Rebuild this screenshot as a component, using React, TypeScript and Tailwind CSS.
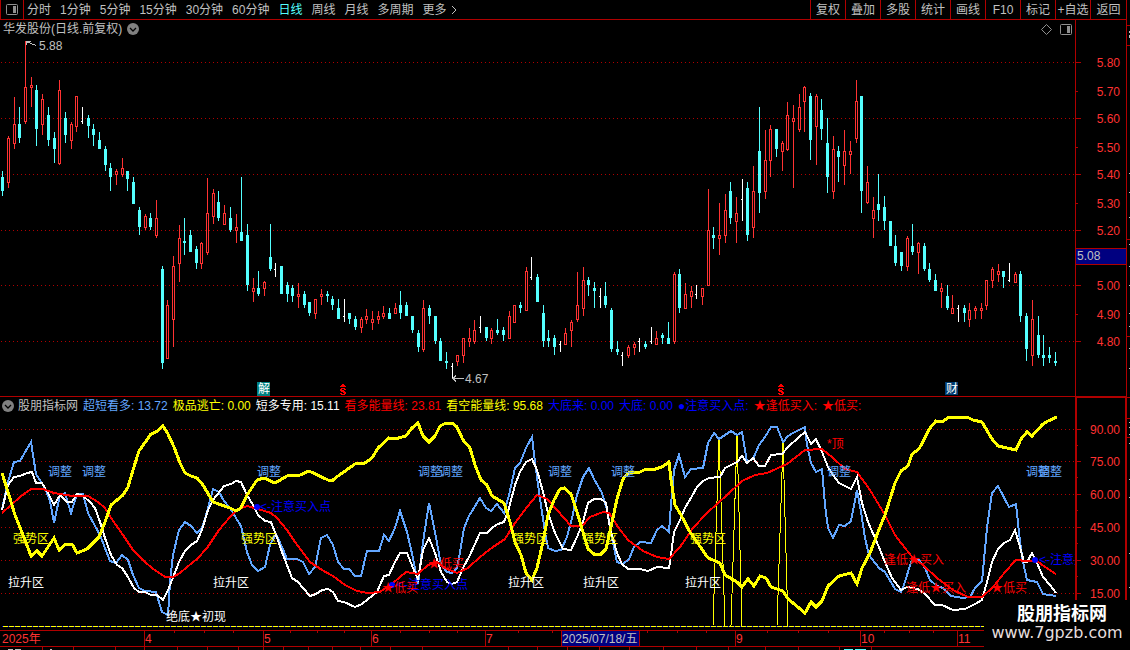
import { Fragment } from "react";

type Kind = "r" | "c" | "w";
type Candle = [Kind, number, number, number, number, number];

const periods = ["分时", "1分钟", "5分钟", "15分钟", "30分钟", "60分钟", "日线", "周线", "月线", "多周期"];
const tools = ["复权", "叠加", "多股", "统计", "画线", "F10", "标记", "+自选", "返回"];

const legend = [
  { text: "超短看多: 13.72", color: "text-[#62a6ff]" },
  { text: "极品逃亡: 0.00", color: "text-[#ffff00]" },
  { text: "短多专用: 15.11", color: "text-white" },
  { text: "看多能量线: 23.81", color: "text-[#ff0000]" },
  { text: "看空能量线: 95.68", color: "text-[#ffff00]" },
  { text: "大底来: 0.00", color: "text-[#0000ff]" },
  { text: "大底: 0.00", color: "text-[#0000ff]" },
  { text: "●注意买入点:", color: "text-[#0000ff]" },
  { text: "★逢低买入:", color: "text-[#ff0000]" },
  { text: "★低买:", color: "text-[#ff0000]" },
];

// kind, x, high, body top, body bottom, low
const candles: Candle[] = [
  ["c", 2, 171, 177, 191, 196], ["r", 8, 136, 138, 183, 188], ["r", 14, 97, 124, 144, 149], ["c", 19, 107, 124, 138, 143],
  ["r", 25, 41, 87, 122, 124], ["r", 31, 77, 85, 88, 107], ["c", 36, 85, 90, 129, 146], ["r", 42, 94, 99, 125, 135],
  ["c", 48, 107, 115, 140, 146], ["c", 54, 132, 138, 149, 163], ["r", 59, 80, 90, 164, 165], ["c", 65, 112, 118, 135, 143],
  ["r", 71, 122, 124, 141, 149], ["r", 76, 96, 96, 127, 132], ["w", 82, 107, 121, 122, 124], ["c", 88, 115, 118, 126, 138],
  ["c", 93, 124, 129, 135, 146], ["c", 99, 132, 140, 149, 149], ["c", 105, 146, 149, 165, 171], ["c", 110, 163, 168, 177, 191],
  ["r", 116, 169, 171, 175, 185], ["r", 122, 158, 168, 175, 177], ["c", 127, 171, 171, 179, 191], ["c", 133, 177, 182, 204, 204],
  ["c", 139, 207, 210, 227, 235], ["r", 145, 214, 216, 228, 230], ["c", 150, 213, 218, 227, 230], ["r", 156, 200, 218, 236, 238],
  ["c", 162, 266, 269, 363, 369], ["r", 167, 300, 305, 359, 359], ["r", 173, 256, 266, 320, 347], ["r", 179, 225, 238, 264, 282],
  ["c", 184, 218, 241, 243, 255], ["c", 190, 230, 235, 252, 252], ["c", 196, 246, 249, 263, 269], ["r", 201, 242, 243, 264, 269],
  ["r", 207, 178, 213, 253, 255], ["r", 213, 189, 193, 217, 224], ["c", 218, 191, 202, 218, 221], ["r", 224, 205, 213, 225, 225],
  ["c", 230, 207, 218, 230, 232], ["r", 236, 214, 227, 231, 243], ["c", 241, 177, 232, 241, 241], ["c", 247, 224, 235, 285, 291],
  ["r", 253, 278, 288, 292, 302], ["c", 258, 271, 288, 294, 296], ["r", 264, 281, 282, 289, 296], ["c", 270, 224, 257, 269, 271],
  ["w", 275, 263, 269, 270, 277], ["c", 281, 266, 266, 294, 294], ["c", 287, 282, 285, 294, 302], ["c", 292, 285, 288, 296, 302],
  ["r", 298, 283, 294, 297, 308], ["c", 304, 291, 294, 305, 308], ["c", 309, 302, 302, 313, 316], ["r", 315, 299, 299, 314, 319],
  ["r", 321, 289, 294, 297, 305], ["c", 327, 291, 294, 296, 302], ["c", 332, 296, 299, 305, 310], ["c", 338, 299, 308, 319, 319],
  ["w", 344, 299, 316, 317, 322], ["c", 349, 313, 313, 319, 324], ["c", 355, 316, 319, 327, 330], ["r", 361, 317, 319, 328, 333],
  ["r", 366, 309, 316, 320, 324], ["r", 372, 311, 319, 323, 330], ["r", 378, 311, 316, 320, 324], ["r", 383, 306, 313, 317, 319],
  ["c", 389, 308, 313, 319, 319], ["r", 395, 303, 308, 314, 314], ["c", 400, 291, 305, 313, 319], ["c", 406, 302, 305, 316, 316],
  ["c", 412, 316, 316, 330, 333], ["c", 418, 330, 333, 347, 352], ["r", 423, 300, 308, 350, 352], ["c", 429, 305, 308, 316, 324],
  ["c", 435, 316, 316, 341, 344], ["c", 440, 338, 341, 361, 361], ["c", 446, 352, 361, 363, 369], ["w", 452, 363, 366, 367, 379],
  ["r", 457, 355, 355, 362, 366], ["r", 463, 338, 338, 356, 363], ["r", 469, 328, 338, 342, 347], ["r", 474, 320, 330, 342, 344],
  ["w", 480, 316, 327, 328, 333], ["c", 486, 327, 327, 338, 341], ["r", 491, 328, 330, 339, 344], ["c", 497, 319, 330, 333, 335],
  ["c", 503, 327, 330, 335, 341], ["r", 509, 311, 316, 339, 339], ["r", 514, 305, 305, 323, 323], ["c", 520, 302, 305, 308, 313],
  ["r", 526, 267, 271, 311, 311], ["w", 531, 257, 277, 278, 280], ["c", 537, 274, 277, 302, 302], ["c", 543, 305, 313, 341, 347],
  ["c", 548, 330, 338, 341, 347], ["c", 554, 335, 338, 347, 355], ["w", 560, 341, 344, 345, 352], ["r", 565, 328, 333, 345, 345],
  ["r", 571, 320, 322, 331, 347], ["r", 577, 272, 305, 320, 322], ["r", 583, 267, 280, 309, 316], ["c", 588, 277, 280, 285, 296],
  ["c", 594, 282, 288, 291, 308], ["w", 600, 288, 296, 297, 308], ["c", 605, 282, 296, 305, 308], ["c", 611, 308, 310, 349, 352],
  ["c", 617, 341, 349, 352, 355], ["w", 622, 352, 355, 356, 366], ["r", 628, 345, 347, 356, 358], ["r", 634, 342, 344, 348, 355],
  ["w", 639, 338, 341, 342, 352], ["c", 645, 341, 344, 347, 349], ["w", 651, 327, 341, 342, 344], ["r", 656, 331, 338, 345, 345],
  ["c", 662, 333, 335, 338, 344], ["c", 668, 322, 338, 344, 344], ["r", 674, 272, 274, 342, 344], ["c", 679, 269, 274, 308, 313],
  ["r", 685, 283, 294, 309, 309], ["r", 691, 286, 291, 297, 308], ["w", 696, 285, 294, 295, 299], ["r", 702, 288, 288, 297, 305],
  ["r", 708, 189, 230, 286, 286], ["c", 713, 227, 235, 238, 249], ["r", 719, 203, 235, 239, 255], ["r", 725, 194, 210, 236, 243],
  ["c", 730, 182, 191, 218, 224], ["r", 736, 197, 213, 222, 243], ["w", 742, 179, 199, 200, 221], ["c", 747, 182, 188, 235, 241],
  ["r", 753, 166, 191, 228, 238], ["c", 759, 107, 151, 193, 213], ["r", 765, 130, 160, 192, 199], ["r", 770, 125, 129, 161, 177],
  ["c", 776, 129, 129, 149, 157], ["r", 782, 141, 143, 152, 171], ["r", 787, 102, 115, 150, 151], ["r", 793, 105, 118, 122, 188],
  ["r", 799, 94, 107, 130, 132], ["r", 804, 86, 87, 102, 132], ["c", 810, 93, 96, 140, 160], ["r", 816, 94, 96, 127, 165],
  ["c", 821, 99, 110, 129, 140], ["c", 827, 118, 143, 177, 193], ["r", 833, 136, 149, 192, 199], ["c", 838, 146, 151, 157, 182],
  ["r", 844, 130, 151, 166, 185], ["r", 850, 141, 151, 155, 174], ["r", 856, 80, 101, 139, 143], ["c", 861, 96, 96, 191, 213],
  ["r", 867, 166, 182, 203, 204], ["r", 873, 197, 210, 219, 238], ["c", 878, 174, 204, 210, 221], ["c", 884, 196, 207, 221, 230],
  ["c", 890, 221, 221, 246, 246], ["c", 895, 235, 246, 263, 266], ["c", 901, 252, 252, 266, 271], ["r", 907, 236, 238, 267, 271],
  ["c", 912, 224, 246, 252, 255], ["r", 918, 242, 243, 253, 274], ["c", 924, 243, 246, 269, 271], ["c", 929, 263, 269, 280, 282],
  ["c", 935, 274, 280, 291, 291], ["r", 941, 283, 288, 292, 308], ["c", 947, 285, 296, 308, 310], ["r", 952, 295, 308, 314, 314],
  ["w", 958, 305, 308, 309, 322], ["c", 964, 305, 308, 313, 322], ["r", 969, 303, 310, 320, 327], ["r", 975, 306, 308, 311, 319],
  ["r", 981, 303, 308, 311, 319], ["r", 986, 280, 280, 306, 310], ["r", 992, 267, 269, 281, 288], ["r", 998, 264, 271, 275, 282],
  ["c", 1003, 271, 271, 277, 288], ["w", 1009, 263, 280, 281, 282], ["r", 1015, 272, 274, 283, 283], ["c", 1020, 271, 274, 316, 322],
  ["c", 1026, 313, 316, 349, 361], ["r", 1032, 300, 319, 356, 366], ["c", 1038, 316, 335, 355, 358], ["c", 1043, 335, 355, 358, 366],
  ["c", 1049, 347, 355, 358, 363], ["c", 1055, 352, 361, 363, 366],
];

const fill: Record<Kind, string> = { r: "#ff3232", c: "#54ffff", w: "#ffffff" };

const blueLine =
  "2,509 8,482 14,462 20,461 31,442 36,474 45,488 50,501 54,523 60,495 65,493 71,513 77,494 83,494 88,513 100,535 110,561 116,563 122,555 128,560 133,575 139,588 145,591 156,592 162,612 168,615 170,582 173,555 179,530 185,522 191,526 197,533 202,528 207,512 213,489 219,492 224,501 230,508 236,518 241,526 247,552 252,565 258,571 265,567 270,545 276,534 282,547 287,559 297,559 303,562 309,574 315,567 321,538 327,535 333,545 338,562 344,569 349,569 355,576 361,576 367,551 379,551 384,535 389,541 395,528 400,511 407,532 413,558 418,584 423,542 429,503 435,532 441,565 447,572 452,573 457,568 460,552 464,528 469,516 480,498 486,508 491,511 497,504 504,513 509,495 515,468 520,463 526,448 532,437 535,462 539,492 545,532 548,548 555,551 561,550 567,537 572,518 577,495 583,477 589,468 594,479 602,493 607,510 612,538 617,562 623,564 629,559 634,547 640,542 651,543 657,530 662,526 669,532 671,505 674,470 679,455 685,477 691,469 703,468 708,443 714,433 719,439 725,435 731,431 737,435 742,432 747,462 753,459 759,445 765,437 771,427 777,427 783,442 788,436 793,433 805,427 807,445 811,463 816,472 822,469 825,505 828,528 833,538 839,525 845,526 851,521 857,490 861,512 865,538 869,555 879,568 885,572 895,589 901,592 905,582 910,565 913,558 919,560 925,568 930,580 937,586 943,588 951,596 963,598 970,597 975,588 982,581 987,528 992,493 998,486 1009,507 1016,504 1020,542 1023,562 1027,580 1037,582 1043,594 1056,596";

const whiteLine =
  "2,510 8,485 14,477 20,476 27,473 32,472 36,483 42,483 48,493 54,505 60,495 67,502 72,502 77,494 83,496 90,502 95,508 100,522 105,538 111,555 117,565 122,568 128,577 134,588 139,592 145,592 151,595 157,595 163,600 168,590 174,575 179,562 185,551 191,545 197,541 202,530 208,510 213,500 224,486 231,484 236,481 241,482 247,495 253,505 258,515 265,521 271,522 276,535 282,552 287,565 292,578 298,582 303,588 310,596 316,594 322,590 328,589 333,592 338,601 344,602 355,607 362,604 368,599 377,592 384,576 389,575 395,562 400,553 407,553 413,568 418,579 423,550 429,538 435,553 441,572 447,582 452,584 457,582 463,568 470,555 480,533 487,533 493,527 498,524 504,522 509,508 515,485 520,472 526,462 532,459 537,470 543,492 548,513 555,533 563,549 571,550 577,537 583,522 588,503 594,499 601,499 606,503 610,528 617,553 622,564 628,569 640,569 648,571 657,567 669,568 671,555 674,532 680,520 685,508 692,496 697,487 703,481 709,478 720,477 725,468 737,462 742,456 747,463 753,458 759,466 765,466 771,455 782,454 788,447 799,437 805,432 811,444 816,439 822,452 828,467 833,475 839,483 851,489 857,477 862,503 868,522 878,545 885,562 892,578 901,590 907,587 918,589 925,594 935,605 942,605 953,610 965,609 975,604 982,600 987,582 992,562 998,549 1004,543 1010,540 1015,530 1020,547 1024,562 1027,562 1032,553 1037,563 1043,577 1050,585 1056,593";

const redLine =
  "2,513 20,497 31,489 43,489 54,493 72,496 88,496 98,502 105,508 111,518 123,535 133,550 145,562 152,568 165,577 173,577 180,573 187,567 197,559 207,548 219,530 230,517 237,510 247,506 258,509 271,513 277,518 287,530 295,542 310,562 322,570 333,576 345,585 357,591 368,593 380,592 393,583 406,572 418,574 428,565 437,562 445,568 457,573 468,568 480,557 493,547 505,539 515,523 527,507 537,495 547,499 557,510 571,526 582,526 590,517 603,512 609,513 618,527 628,540 643,551 657,557 669,559 680,547 693,528 707,513 727,495 742,481 755,475 767,473 787,464 805,450 822,449 833,458 845,469 857,472 870,490 885,515 895,535 905,548 913,558 923,565 937,578 953,590 968,597 982,597 993,587 1005,572 1016,560 1027,561 1037,561 1045,567 1056,574";

const yellowLine =
  "2,473 8,492 15,515 25,540 31,556 37,551 42,556 54,538 59,550 66,544 72,544 77,553 87,549 99,537 105,522 111,505 123,495 128,487 133,470 139,451 151,434 156,432 163,426 168,434 174,447 180,463 185,473 191,476 197,478 203,485 213,502 230,508 236,511 241,508 247,495 257,480 264,478 275,483 287,476 300,475 309,471 328,480 333,480 338,476 355,464 365,463 372,458 378,448 389,438 395,439 406,436 412,428 418,423 423,436 429,442 435,436 440,426 446,423 452,423 457,427 463,440 470,448 475,465 481,480 487,485 492,496 504,503 510,522 515,542 521,555 526,573 532,580 537,568 543,542 548,515 554,500 560,489 564,488 571,494 577,512 583,532 588,549 594,554 601,554 606,549 612,522 617,499 623,479 628,473 640,472 646,469 652,470 662,467 669,462 671,480 675,505 681,515 690,532 708,558 720,563 725,575 737,582 742,587 748,579 754,586 760,576 766,578 771,587 783,591 788,599 793,603 805,613 811,602 816,607 822,601 828,586 839,576 851,573 857,584 862,568 870,553 880,527 885,515 895,483 901,471 908,466 912,454 919,449 930,428 936,421 942,422 949,417 967,417 973,420 982,422 992,439 998,446 1016,450 1021,439 1027,432 1032,436 1043,424 1048,421 1057,417";

const spikes = ["713,626 719,439 725,626", "731,626 737,435 742,626", "777,626 783,442 788,626"];

const marks: { text: string; x: number; y: number; color: string }[] = [
  ...[48, 82, 257, 418, 439, 548, 611, 827, 1026, 1038].map((x) => ({ text: "调整", x, y: 476, color: "#62a6ff" })),
  ...[13, 241, 512, 582, 690].map((x) => ({ text: "强势区", x, y: 543, color: "#ffff00" })),
  ...[8, 213, 508, 583, 685].map((x) => ({ text: "拉升区", x, y: 587, color: "#ffffff" })),
  { text: "绝底★初现", x: 166, y: 621, color: "#ffffff" },
  { text: "<-注意买入点", x: 260, y: 511, color: "#0000ff" },
  { text: "<-注意买入点", x: 397, y: 589, color: "#0000ff" },
  { text: "<-注意买入点", x: 1039, y: 564, color: "#0000ff" },
  { text: "*顶", x: 827, y: 448, color: "#ff0000" },
  { text: "★低买", x: 382, y: 592, color: "#ff0000" },
  { text: "★低买", x: 428, y: 568, color: "#ff0000" },
  { text: "★低买", x: 991, y: 592, color: "#ff0000" },
  { text: "逢低★买入", x: 884, y: 564, color: "#ff0000" },
  { text: "逢低★买入", x: 906, y: 592, color: "#ff0000" },
];

const dots = [[257, 507], [392, 585], [1035, 560]];

const prices = [
  { label: "5.80", y: 62, major: true },
  { label: "5.70", y: 91, major: false },
  { label: "5.60", y: 118, major: true },
  { label: "5.50", y: 147, major: false },
  { label: "5.40", y: 174, major: true },
  { label: "5.30", y: 203, major: false },
  { label: "5.20", y: 230, major: true },
  { label: "5.00", y: 285, major: true },
  { label: "4.90", y: 314, major: false },
  { label: "4.80", y: 341, major: true },
];

const levels = [
  { label: "90.00", y: 429 },
  { label: "75.00", y: 461 },
  { label: "60.00", y: 494 },
  { label: "45.00", y: 527 },
  { label: "30.00", y: 560 },
  { label: "15.00", y: 593 },
];

const months = [
  { label: "4", x: 144 },
  { label: "5", x: 263 },
  { label: "6", x: 371 },
  { label: "7", x: 485 },
  { label: "9", x: 735 },
  { label: "10", x: 860 },
  { label: "11", x: 957 },
];

const weekTicks = [174, 204, 233, 290, 317, 344, 400, 429, 457, 518, 552, 647, 677, 706, 767, 798, 828, 884, 909, 933];
const tabTicks = [42, 73, 115, 144, 177, 207, 238, 263, 283, 308, 332, 360, 390, 422, 508, 537, 567, 599, 629, 663, 696, 728, 765, 798, 839, 871];

function RoundChevron() {
  return (
    <svg className="h-3 w-3 shrink-0" viewBox="0 0 12 12" aria-hidden="true">
      <circle cx="6" cy="6" r="6" fill="#808080" />
      <path d="M3 5l3 3 3-3" fill="none" stroke="#000" strokeWidth="1.3" />
    </svg>
  );
}

function PanelIcon() {
  return (
    <svg className="h-[11px] w-3 shrink-0" viewBox="0 0 12 11" aria-hidden="true">
      <rect x="0.5" y="0.5" width="11" height="10" rx="1" fill="none" stroke="#909090" />
      <rect x="7" y="2" width="3" height="7" fill="#909090" />
    </svg>
  );
}

function GridLine({ y }: { y: number }) {
  return <line x1="1" x2="1075" y1={y + 0.5} y2={y + 0.5} stroke="#b00000" strokeDasharray="1 3" />;
}

function Dividend({ x }: { x: number }) {
  return (
    <path
      d={`M${x + 2} 384h2v1h1v1h1v1h-6v-1h1v-1h1zM${x + 1} 388h4v1h1v1h-2v-1h-2v1h2v1h1v1h1v2h-1v1h-4v-1h-1v-1h2v1h2v-1h-1v-1h-2v-1h-1v-2h1z`}
      fill="#ff0000"
      shapeRendering="crispEdges"
    />
  );
}

function CandleChart() {
  return (
    <svg className="block h-[358px] w-full text-[12px]" viewBox="0 38 1075 358" preserveAspectRatio="xMaxYMin meet">
      <g shapeRendering="crispEdges">
        {prices.filter((p) => p.major).map((p) => (
          <GridLine key={p.y} y={p.y} />
        ))}
        {candles.map(([kind, x, high, top, bottom, low]) => (
          <Fragment key={x}>
            <rect x={x} y={high} width="1" height={low - high} fill={fill[kind]} />
            {kind === "w" ? (
              <rect x={x - 1} y={top} width="1" height="1" fill={fill.w} />
            ) : (
              <rect x={x - 1} y={top} width="3" height={bottom - top} fill={fill[kind]} />
            )}
            {kind === "r" && <rect x={x} y={top + 1} width="1" height={bottom - top - 2} fill="#000" />}
          </Fragment>
        ))}
        <path d="M26.500 45v-4h4M26 41.500l10 4M464 378.500h-11l3-3M453 378.500l3 3" fill="none" stroke="#c0c0c0" />
      </g>
      <text x="39" y="50" fill="#c0c0c0">5.88</text>
      <text x="465" y="383" fill="#c0c0c0">4.67</text>
      <rect x="257" y="382" width="13" height="14" fill="#008080" />
      <text x="258" y="393" fill="#fff">解</text>
      <rect x="945" y="382" width="13" height="13" fill="#003c70" />
      <text x="946" y="393" fill="#fff">财</text>
      <Dividend x={340} />
      <Dividend x={778} />
    </svg>
  );
}

function IndicatorChart() {
  return (
    <svg className="block h-[216px] w-full text-[12px]" viewBox="0 414 1075 216" preserveAspectRatio="xMaxYMin meet">
      <g shapeRendering="crispEdges" fill="none">
        {levels.map((l) => (
          <GridLine key={l.y} y={l.y} />
        ))}
        <line x1="2" x2="1056" y1="626.5" y2="626.5" stroke="#0000ff" />
        <line x1="3" x2="1056" y1="626.5" y2="626.5" stroke="#ffff00" strokeDasharray="5 1" />
        {spikes.map((p) => (
          <polyline key={p} points={p} stroke="#ffff00" />
        ))}
        <polyline points={blueLine} stroke="#62a6ff" strokeWidth="2" />
        <polyline points={whiteLine} stroke="#ffffff" strokeWidth="2" />
        <polyline points={redLine} stroke="#ff0000" strokeWidth="2" />
        <polyline points={yellowLine} stroke="#ffff00" strokeWidth="3" />
      </g>
      {dots.map(([x, y]) => (
        <circle key={x} cx={x} cy={y} r="3" fill="#0000ff" />
      ))}
      {marks.map((m) => (
        <text key={`${m.x}-${m.y}`} x={m.x} y={m.y} fill={m.color}>
          {m.text}
        </text>
      ))}
    </svg>
  );
}

function PriceAxis() {
  return (
    <svg className="block h-[376px] w-[51px] text-[12px]" viewBox="1075 20 51 376">
      <g shapeRendering="crispEdges" fill="#b00000">
        <rect x="1075" y="20" width="1" height="376" />
        {prices.map((p) => (
          <rect key={p.y} x="1076" y={p.y} width={p.major ? 5 : 2} height="1" />
        ))}
        <rect x="1075" y="248" width="51" height="17" />
        <rect x="1076" y="249" width="50" height="15" fill="#000080" />
      </g>
      {prices.map((p) => (
        <text key={p.label} x="1120" y={p.y + 5} textAnchor="end" fill="#ff3232">
          {p.label}
        </text>
      ))}
      <text x="1077" y="260" fill="#c0c0c0">5.08</text>
    </svg>
  );
}

function LevelAxis() {
  return (
    <svg className="block h-[233px] w-[51px] text-[12px]" viewBox="1075 397 51 233">
      <g shapeRendering="crispEdges" fill="#b00000">
        <rect x="1075" y="397" width="51" height="1" />
        <rect x="1075" y="397" width="2" height="233" />
        <rect x="1125" y="397" width="1" height="233" />
        {levels.map((l) => (
          <Fragment key={l.y}>
            <rect x="1077" y={l.y} width="4" height="1" />
            <rect x="1077" y={l.y + 16} width="1" height="1" />
          </Fragment>
        ))}
      </g>
      {levels.map((l) => (
        <text key={l.label} x="1120" y={l.y + 5} textAnchor="end" fill="#ff3232">
          {l.label}
        </text>
      ))}
    </svg>
  );
}

function TimeAxis() {
  return (
    <svg className="block h-5 w-full text-[12px]" viewBox="0 630 1126 20" preserveAspectRatio="xMaxYMin meet">
      <g shapeRendering="crispEdges" fill="#b00000">
        <rect x="0" y="630" width="1126" height="1" />
        <rect x="0" y="646" width="1126" height="1" />
        {months.map((m) => (
          <rect key={m.x} x={m.x} y="630" width="1" height="16" />
        ))}
        {weekTicks.map((x) => (
          <rect key={x} x={x} y="631" width="1" height="2" />
        ))}
        {tabTicks.map((x) => (
          <rect key={x} x={x} y="647" width="1" height="3" />
        ))}
        <rect x="561" y="630" width="79" height="17" />
        <rect x="562" y="631" width="77" height="15" fill="#000080" />
        <path d="M8 649h5v1h-5zM15 649h6v1h-6zM50 649h2v1h-2z" fill="#c0c0c0" />
        <path d="M844 649h9v1h-9zM855 649h11v1h-11z" fill="#54ffff" />
      </g>
      <text x="2" y="643" fill="#ff3232">2025年</text>
      {months.map((m) => (
        <text key={m.label} x={m.x + 1} y="643" fill="#ff3232">
          {m.label}
        </text>
      ))}
      <text x="562" y="643" fill="#c0c0c0">2025/07/18/五</text>
    </svg>
  );
}

export default function App() {
  return (
    <div className="relative flex overflow-hidden bg-black font-['Liberation_Sans','Noto_Sans_CJK_SC',sans-serif] text-[12px] leading-4 text-[#c0c0c0]">
      <main className="min-w-0 flex-1">
        <header className="flex h-5 items-center justify-between border-b border-[#b00000]">
          <nav className="flex h-full items-center gap-[9px] whitespace-nowrap">
            <button type="button" aria-label="切换面板" className="-mr-1.5 flex h-full w-6 items-center justify-center border-x border-[#b00000]">
              <PanelIcon />
            </button>
            {periods.map((p) => (
              <button key={p} type="button" className={p === "日线" ? "text-[#54ffff]" : ""}>
                {p}
              </button>
            ))}
            <button type="button" className="flex items-center gap-1">
              更多
              <svg className="h-[10px] w-[6px]" viewBox="0 0 6 10" aria-hidden="true">
                <path d="M1 1l4 4-4 4" fill="none" stroke="#c0c0c0" />
              </svg>
            </button>
          </nav>
          <div className="flex h-full whitespace-nowrap">
            {tools.map((t) => (
              <button key={t} type="button" className="h-full w-[35px] border-l border-[#b00000] text-center last:w-9">
                {t}
              </button>
            ))}
          </div>
        </header>

        <section className="flex border-b border-[#b00000]">
          <div className="min-w-0 flex-1">
            <div className="flex h-[18px] items-center justify-between pr-[3px] pl-[3px]">
              <h1 className="flex items-center gap-[5px]">
                华发股份(日线.前复权)
                <RoundChevron />
              </h1>
              <div className="flex items-center gap-2">
                <svg className="h-[11px] w-[11px]" viewBox="0 0 11 11" aria-hidden="true">
                  <path d="M5.500 0.500l5 5-5 5-5-5z" fill="none" stroke="#909090" />
                </svg>
                <PanelIcon />
              </div>
            </div>
            <CandleChart />
          </div>
          <PriceAxis />
        </section>

        <section className="flex">
          <div className="min-w-0 flex-1">
            <div className="flex h-[17px] items-center gap-[5px] overflow-hidden pl-[2px] whitespace-nowrap">
              <h2 className="flex items-center gap-1">
                <RoundChevron />
                股朋指标网
              </h2>
              {legend.map((item) => (
                <span key={item.text} className={item.color}>
                  {item.text}
                </span>
              ))}
            </div>
            <IndicatorChart />
          </div>
          <LevelAxis />
        </section>
        <TimeAxis />
      </main>

      <aside className="w-1 shrink-0 border-l border-[#b00000]">
        <svg className="block h-[650px] w-[3px]" viewBox="0 0 3 650" shapeRendering="crispEdges" aria-hidden="true">
          <path d="M0 25h3v1h-3zM0 45h3v1h-3zM0 239h3v1h-3zM0 336h3v1h-3zM0 397h3v1h-3zM0 418h3v1h-3zM0 437h3v1h-3z" fill="#b00000" />
          <path
            d="M2 31h1v2h-1zM2 35h1v3h-1zM2 173h1v1h-1zM2 192h1v1h-1zM2 217h1v1h-1zM2 244h1v1h-1zM2 266h1v1h-1zM2 285h1v1h-1zM2 313h1v1h-1zM2 326h1v1h-1zM2 348h1v1h-1zM2 368h1v1h-1zM2 422h1v1h-1zM2 427h1v1h-1zM2 434h1v1h-1zM2 443h1v1h-1zM2 479h1v1h-1zM2 497h1v1h-1zM2 553h1v1h-1zM2 587h1v1h-1z"
            fill="#c0c0c0"
          />
        </svg>
      </aside>

      <div className="absolute right-0 bottom-0 flex h-[50px] w-[146px] flex-col items-center bg-black pt-1 text-white">
        <span className="pl-2.5 text-[18px] leading-[20px] font-bold">股朋指标网</span>
        <span className="font-['DejaVu_Sans',sans-serif] text-[16px] leading-[18px] text-[#e6dede]">www.7gpzb.com</span>
      </div>
    </div>
  );
}
